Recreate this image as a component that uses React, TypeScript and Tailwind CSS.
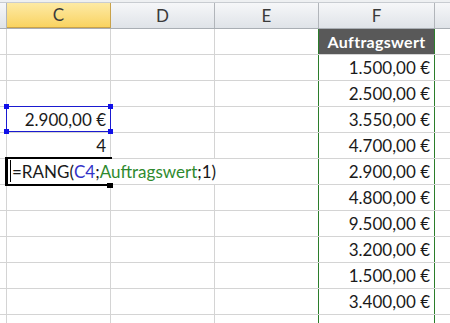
const FONT = { fontFamily: "Lato, 'Open Sans', sans-serif" };

const values = [
  "1.500,00 €",
  "2.500,00 €",
  "3.550,00 €",
  "4.700,00 €",
  "2.900,00 €",
  "4.800,00 €",
  "9.500,00 €",
  "3.200,00 €",
  "1.500,00 €",
  "3.400,00 €",
  "",
];

function HeaderRow() {
  const cell =
    "h-full shrink-0 border-r border-[#b1b5ba] bg-gradient-to-b from-[#f6f7f9] to-[#dfe3e8] flex items-center justify-center text-[17px] text-[#3a3a3a]";
  return (
    <div className="flex h-[26px] border-b border-[#a9aeb4]">
      <div className={`${cell} w-[7px]`} />
      <div className="h-full w-[104px] shrink-0 border-r border-b border-[#c9a24a] bg-gradient-to-b from-[#fdeaa4] to-[#f9d35f] flex items-center justify-center text-[17px] text-[#3a3a3a]">
        C
      </div>
      <div className={`${cell} w-[104px]`}>D</div>
      <div className={`${cell} w-[104px]`}>E</div>
      <div className={`${cell} w-[116px]`}>F</div>
      <div className={`${cell} flex-1 border-r-0`} />
    </div>
  );
}

function DataRow({ index, value }: { index: number; value: string }) {
  const grid = "h-full shrink-0 border-r border-[#d4d4d4]";
  const isHead = index === 0;
  let c: React.ReactNode = null;
  if (index === 3) c = "2.900,00 €";
  if (index === 4) c = "4";
  const editing = index === 5;
  return (
    <div className="flex h-[26px] border-b border-[#d4d4d4]">
      <div className={`${grid} w-[7px]`} />
      {editing ? (
        <div className="h-full w-[312px] shrink-0 border-r border-[#2b7d2b] flex items-center pl-[5px] text-[17px] text-[#1a1a1a] whitespace-nowrap">
          <span>=RANG(</span>
          <span className="text-[#3232c8]">C4</span>
          <span>;</span>
          <span className="text-[#2e8a2e]">Auftragswert</span>
          <span>;1)</span>
        </div>
      ) : (
        <>
          <div className={`${grid} w-[104px] flex items-center justify-end pr-[4px] text-[17px] text-[#1a1a1a]`}>
            {c}
          </div>
          <div className={`${grid} w-[104px]`} />
          <div className="h-full w-[104px] shrink-0 border-r border-[#2b7d2b]" />
        </>
      )}
      {isHead ? (
        <div className="h-full w-[116px] shrink-0 border-r border-[#2b7d2b] bg-[#595959] flex items-center justify-center text-[16px] font-bold text-white tracking-[0.3px]">
          {value}
        </div>
      ) : (
        <div className="h-full w-[116px] shrink-0 border-r border-[#2b7d2b] flex items-center justify-end pr-[4px] text-[17px] text-[#1a1a1a]">
          {value}
        </div>
      )}
      <div className="h-full flex-1" />
    </div>
  );
}

function Handle({ className }: { className: string }) {
  return <div className={`absolute w-[5px] h-[5px] bg-[#1010e8] ${className}`} />;
}

export default function App() {
  return (
    <div className="relative w-[450px] h-[323px] overflow-hidden bg-white" style={FONT}>
      <div className="h-[3px] bg-[#eef0f2] border-b border-[#c8ccd1]" />
      <HeaderRow />
      {["Auftragswert", ...values].map((v, i) => (
        <DataRow key={i} index={i} value={v} />
      ))}

      {/* reference box C4 */}
      <div className="absolute left-[6px] top-[106px] w-[105px] h-[26px] border border-[#1a1ad0]">
        <Handle className="-left-[3px] -top-[3px]" />
        <Handle className="-right-[3px] -top-[3px]" />
        <Handle className="-left-[3px] -bottom-[3px]" />
        <Handle className="-right-[3px] -bottom-[3px]" />
      </div>

      {/* edit box C6 */}
      <div className="absolute left-[5px] top-[157px] w-[107px] h-[2px] bg-black" />
      <div className="absolute left-[5px] top-[184px] w-[103px] h-[2px] bg-black" />
      <div className="absolute left-[5px] top-[157px] w-[3px] h-[29px] bg-black" />
      <div className="absolute left-[10px] top-[160px] w-[1px] h-[22px] bg-black" />
      <div className="absolute left-[107px] top-[183px] w-[6px] h-[5px] bg-black" />
    </div>
  );
}
